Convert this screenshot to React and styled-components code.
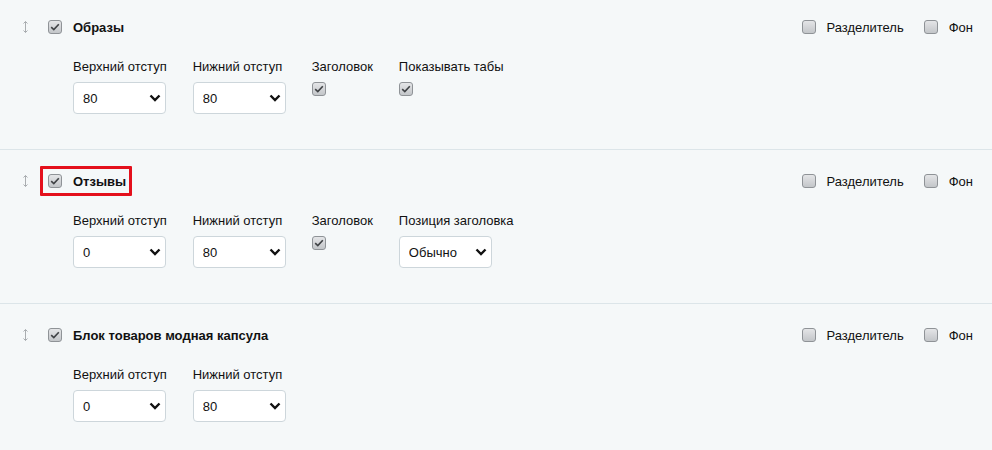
import React from "react";
import styled, { createGlobalStyle } from "styled-components";

const GlobalStyle = createGlobalStyle`
  html, body {
    margin: 0;
    padding: 0;
    background: #f5f8f9;
  }
  body {
    font-family: "Liberation Sans", Arial, sans-serif;
    font-size: 13px;
    color: #111;
  }
`;

const Page = styled.div`
  margin-top: -4px;
`;

const Section = styled.section`
  padding: 23px 19px 35px 20px;
  border-bottom: 1px solid #dce5e9;
`;

const Header = styled.div`
  display: flex;
  align-items: center;
  height: 16px;
`;

const Drag = styled.span`
  display: flex;
  width: 10px;
  justify-content: center;
  color: #a9adb0;
  margin-right: 18px;
`;

const TitleGroup = styled.label`
  position: relative;
  display: flex;
  align-items: center;
  gap: 11px;

  &::after {
    content: "";
    display: ${(p) => (p.$highlighted ? "block" : "none")};
    position: absolute;
    left: -8px;
    right: -6px;
    top: -8px;
    bottom: -7px;
    border: 3px solid #e4101c;
    border-radius: 1px;
  }
`;

const Title = styled.span`
  font-weight: bold;
  font-size: 13px;
  color: #111;
`;

const Options = styled.div`
  margin-left: auto;
  display: flex;
  align-items: center;
  gap: 20px;
`;

const Option = styled.label`
  display: flex;
  align-items: center;
  gap: 11px;
  color: #111;
`;

const Box = styled.span`
  box-sizing: border-box;
  width: 14px;
  height: 14px;
  border: 1px solid #8f9397;
  border-radius: 3px;
  background: linear-gradient(#e4e5e7, #c3c6c9);
  display: flex;
  align-items: center;
  justify-content: center;
  flex-shrink: 0;
`;

const Fields = styled.div`
  display: flex;
  gap: 26px;
  margin: 24px 0 0 53px;
`;

const Field = styled.div`
  display: flex;
  flex-direction: column;
  gap: 8px;
`;

const Label = styled.span`
  font-size: 13px;
  line-height: 15px;
  color: #111;
  white-space: nowrap;
`;

const SelectWrap = styled.div`
  position: relative;
  width: 93px;
`;

const Select = styled.select`
  appearance: none;
  box-sizing: border-box;
  width: 100%;
  height: 32px;
  padding: 0 24px 0 9px;
  font-family: "Liberation Sans", Arial, sans-serif;
  font-size: 13px;
  color: #111;
  background: #fff;
  border: 1px solid #cdd6db;
  border-radius: 4px;
  outline: none;
`;

const Chevron = styled.span`
  position: absolute;
  right: 5px;
  top: 50%;
  transform: translateY(-50%);
  display: flex;
  pointer-events: none;
`;

const Checkbox = ({ checked }) => (
  <Box>
    {checked && (
      <svg width="10" height="8" viewBox="0 0 10 8">
        <path d="M1.2 4.2 L3.8 6.6 L8.8 1.2" fill="none" stroke="#3f4245" strokeWidth="1.6" />
      </svg>
    )}
  </Box>
);

const DragIcon = () => (
  <svg width="5" height="12" viewBox="0 0 5 12">
    <path d="M2.5 0.5 V11.5 M0.5 2.5 L2.5 0.5 L4.5 2.5 M0.5 9.5 L2.5 11.5 L4.5 9.5" fill="none" stroke="currentColor" strokeWidth="1" />
  </svg>
);

const SelectField = ({ label, value }) => (
  <Field>
    <Label>{label}</Label>
    <SelectWrap>
      <Select defaultValue={value}>
        <option>{value}</option>
      </Select>
      <Chevron>
        <svg width="12" height="8" viewBox="0 0 12 8">
          <path d="M1.5 1.5 L6 6 L10.5 1.5" fill="none" stroke="#111" strokeWidth="2.4" />
        </svg>
      </Chevron>
    </SelectWrap>
  </Field>
);

const CheckField = ({ label }) => (
  <Field>
    <Label>{label}</Label>
    <Checkbox checked />
  </Field>
);

const BlockSection = ({ title, highlighted, children }) => (
  <Section>
    <Header>
      <Drag>
        <DragIcon />
      </Drag>
      <TitleGroup $highlighted={highlighted}>
        <Checkbox checked />
        <Title>{title}</Title>
      </TitleGroup>
      <Options>
        <Option>
          <Checkbox />
          Разделитель
        </Option>
        <Option>
          <Checkbox />
          Фон
        </Option>
      </Options>
    </Header>
    <Fields>{children}</Fields>
  </Section>
);

const App = () => (
  <>
    <GlobalStyle />
    <Page>
      <BlockSection title="Образы">
        <SelectField label="Верхний отступ" value="80" />
        <SelectField label="Нижний отступ" value="80" />
        <CheckField label="Заголовок" />
        <CheckField label="Показывать табы" />
      </BlockSection>
      <BlockSection title="Отзывы" highlighted>
        <SelectField label="Верхний отступ" value="0" />
        <SelectField label="Нижний отступ" value="80" />
        <CheckField label="Заголовок" />
        <SelectField label="Позиция заголовка" value="Обычно" />
      </BlockSection>
      <BlockSection title="Блок товаров модная капсула">
        <SelectField label="Верхний отступ" value="0" />
        <SelectField label="Нижний отступ" value="80" />
      </BlockSection>
    </Page>
  </>
);

export default App;
